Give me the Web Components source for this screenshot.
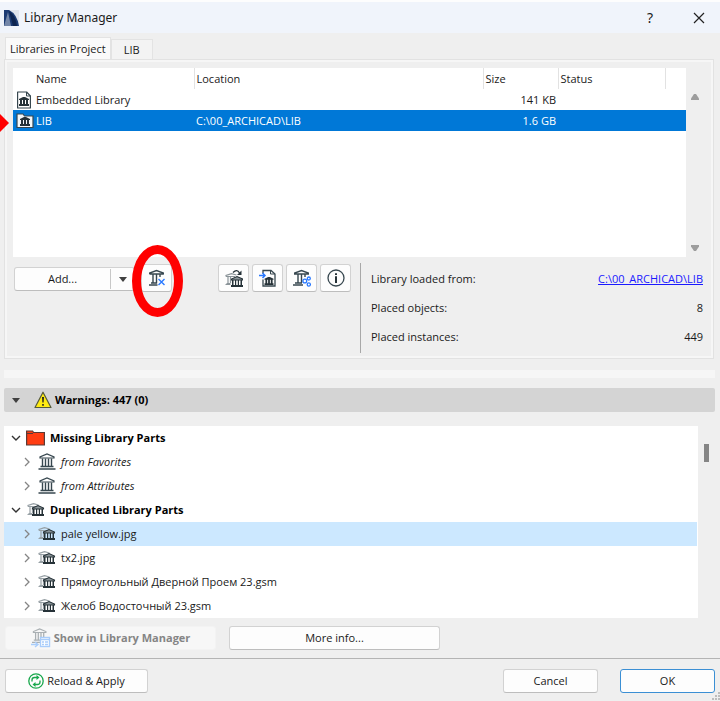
<!DOCTYPE html>
<html lang="en">
<head>
<meta charset="utf-8">
<title>Library Manager</title>
<style>
  html, body { height: 100%; margin: 0; }
  body {
    background: #efefef;
    color: #1a1a1a;
    font: 11px/16px "Open Sans", "Noto Sans", sans-serif;
  }
</style>
</head>
<body>
<library-manager></library-manager>

<script>
// outlined museum with four columns, 17x17 box
const hall = (x, y, s, color) => `
  <g transform="translate(${x} ${y}) scale(${s})" fill="none" stroke="${color}" stroke-width="1.2">
    <path d="M1.500 5V4L8.500 1l7 3v1Z"/>
    <path d="M4 5.500v8M7 5.500v8M10 5.500v8M13 5.500v8" stroke-width="1.400"/>
    <path d="M2 13.500h13M0 16h17" stroke-width="1.400"/>
  </g>`;

// solid museum, 10x9 box
const miniHall = (x, y) => `
  <path transform="translate(${x} ${y})" fill="#263238" d="M4 0h2l4 2v1H0V2ZM1 3h2v4H1ZM4 3h2v4H4ZM7 3h2v4H7ZM0 7h10v2H0Z"/>`;

// small museum with visible columns, 12x11 box
const smallHall = (x, y) => `
  <g transform="translate(${x} ${y})">
    <path d="M.500 4V3L6 .6 11.500 3v1Z" fill="#8a9499" stroke="#263238" stroke-width="1.100"/>
    <path fill="#263238" d="M1 4h1.500v5H1ZM4 4h1.200v5H4ZM6.800 4H8v5H6.800ZM9.500 4H11v5H9.500ZM0 9h12v2H0Z"/>
  </g>`;

const pillar = (x, y, color) => `
  <g transform="translate(${x} ${y})" fill="none" stroke="${color}" stroke-width="1.200">
    <path d="M.500 3.500V2.500L6 .6l5 1.400M.500 3.500h9M2.500 4v6M5 4v6M1 10.500h4M0 11.500h5"/>
  </g>`;

const ICONS = {
  app: [16, 16, `<path fill="#dfe4ec" d="M1 0h14v16H1z"/><path fill="#1c3b73" d="M0 0h5Q13 4 15 16H0Z"/><path fill="#dfe4ec" d="m0 16 4-14 3 14Z" opacity=".45"/><path fill="#0d2450" d="M5 1q7 5 8 15H9Z"/>`],
  doc: [16, 18, `<path d="M1.600 1h9L14.400 5v12H1.600Z" fill="#fff" stroke="#37474f" stroke-width="1.200" stroke-linejoin="round"/><path d="M10.500 1v4h4" fill="none" stroke="#37474f"/>${miniHall(3, 6)}`],
  folder: [18, 16, `<path d="M1 14.500V1h6l1.500 2H17v11.500Z" fill="#f4f7f9" stroke="#37474f" stroke-width="1.200"/>${miniHall(4, 4)}`],
  remove: [18, 18, `<g fill="none" stroke="#37474f" stroke-width="1.400"><path d="M1.700 5V4l6.800-2.500L15.300 4v1.500M1.500 5h14M5 5.500v9M8.500 5.500v9M12 5.500v2.500M3 14h6M1 16h8.500"/><path d="m10.500 10 6 6M16.500 10l-6 6" stroke="#2979ff"/></g>`],
  replace: [18, 18, `${pillar(.5, 4, "#8b9499")}<path d="M8 3.500q4-4 6.500.5" fill="none" stroke="#263238" stroke-width="1.300"/><path d="M16.500 1.500V6H12Z" fill="#263238"/>${smallHall(6, 7)}`],
  import: [18, 18, `<path d="M4 4.500v-3h8L16 5v12H4v-6.500" fill="none" stroke="#37474f" stroke-width="1.300"/><path d="M11.500 1.500V5H16" fill="none" stroke="#37474f"/><g transform="translate(5.500 8) scale(.9)">${miniHall(0, 0)}</g><path d="M0 6.500h6M3.500 4 6 6.500 3.500 9" fill="none" stroke="#2979ff" stroke-width="1.500"/>`],
  settings: [18, 18, `<g fill="none" stroke="#37474f" stroke-width="1.400"><path d="M1.700 5V4l6.800-2.500L15.300 4v1ZM5 5.500v8.500M8.500 5.500v8.500M12 5.500v2.500M2 14h7M0 16h10"/></g><g fill="#fff" stroke="#2979ff" stroke-width="1.300"><circle cx="11.800" cy="12" r="1.900"/><circle cx="15.800" cy="9.500" r="1.500"/><circle cx="15.800" cy="15.500" r="1.600"/></g>`],
  info: [18, 18, `<circle cx="9" cy="9" r="8" fill="none" stroke="#37474f" stroke-width="1.300"/><path d="M8 4.200h2v1.800H8ZM8 7.300h2V14H8Z" fill="#263238"/>`],
  warning: [18, 18, `<path d="M9 1.200 17 16.500H1Z" fill="#ffeb12" stroke="#555a3a" stroke-width="1.200" stroke-linejoin="round"/><path d="M8 6h2l-.4 5.500H8.400ZM8.200 13h1.600v1.800H8.200Z" fill="#222"/>`],
  missing: [19, 16, `<path d="M.600 15V1h6l1 1.500h10.800V15Z" fill="#ff3d12" stroke="#5a3a36" stroke-width="1.200"/><path d="M1 3.500h6" stroke="#5a3a36"/>`],
  hall: [19, 18, hall(1.5, 0, 1, "#37474f")],
  duplicate: [19, 14, `${pillar(1.5, 0, "#98a1a6")}${smallHall(6, 2)}`],
  show: [20, 20, `${hall(1, 0, .9, "#aab0b3")}<rect x="9.500" y="9.500" width="9" height="9" fill="#fff" stroke="#a9cdfb" stroke-width="1.400"/><path d="M9 11.500h10M11 14h2M14 14h3M11 16.500h2M14 16.500h3M0 16.500h6M4 14l3 2.500L4 19" fill="none" stroke="#a9cdfb" stroke-width="1.400"/>`],
  reload: [16, 16, `<g fill="none" stroke="#18a84c" stroke-width="1.300"><circle cx="8" cy="8" r="7.200"/><path d="M4 8.500V7q0-2.500 2.500-2.500h3M12 7.500V9q0 2.500-2.500 2.500h-3"/></g><path d="M8.500 2 11.500 4.500 8.500 7ZM7.500 9 4.500 11.500 7.500 14Z" fill="#18a84c"/>`],
  close: [12, 12, `<path d="m1 1 10 10M11 1 1 11" stroke="#222" stroke-width="1.200"/>`],
  down: [8, 5, `<path d="M0 0h8L4 5Z" fill="#404040"/>`],
  scrollUp: [8, 6, `<path d="M3 0h2l3 4.500V6H0V4.500Z" fill="#9d9d9d"/>`],
  scrollDown: [8, 6, `<path d="M3 6h2l3-4.500V0H0v1.500Z" fill="#9d9d9d"/>`],
  open: [10, 10, `<path d="m1 3 4 4 4-4" fill="none" stroke="#333" stroke-width="1.400"/>`],
  closed: [10, 10, `<path d="m3 1 4 4-4 4" fill="none" stroke="#858585" stroke-width="1.300"/>`],
  grip: [8, 8, `<path d="M6 0h2v2H6ZM3 3h2v2H3ZM6 3h2v2H6ZM0 6h2v2H0ZM3 6h2v2H3ZM6 6h2v2H6Z" fill="#bdbdbd"/>`],
};

class LmIcon extends HTMLElement {
  connectedCallback() {
    const [w, h, body] = ICONS[this.getAttribute("name")];
    this.attachShadow({ mode: "open" }).innerHTML = `
      <style>
        :host { display: inline-block; flex: none; line-height: 0; }
        svg { display: block; }
      </style>
      <svg width="${w}" height="${h}" viewBox="0 0 ${w} ${h}" aria-hidden="true">${body}</svg>`;
  }
}

class LmButton extends HTMLElement {
  connectedCallback() {
    const label = this.getAttribute("label");
    this.attachShadow({ mode: "open" }).innerHTML = `
      <style>
        :host { display: block; }
        button {
          display: flex;
          align-items: center;
          justify-content: center;
          gap: 3px;
          box-sizing: border-box;
          width: 100%;
          height: 24px;
          padding: 0;
          border: 1px solid #d2d2d2;
          border-bottom-color: #bdbdbd;
          border-radius: 3px;
          background: #fdfdfd;
          color: inherit;
          font: inherit;
        }
        :host([tall]) button { height: 28px; }
        :host([primary]) button { border-color: #3b8fd4; }
        button:disabled {
          border-color: #f3f3f3;
          background: #f7f7f7;
          color: #858585;
          font-weight: bold;
        }
      </style>
      <button type="button" ${this.hasAttribute("disabled") ? "disabled" : ""} ${label ? `aria-label="${label}"` : ""}><slot></slot></button>`;
  }
}

class LmTitlebar extends HTMLElement {
  connectedCallback() {
    this.attachShadow({ mode: "open" }).innerHTML = `
      <style>
        :host {
          display: flex;
          align-items: center;
          height: 31px;
          padding: 0 15px 0 4px;
          border-top: 2px solid #fdfdfd;
          background: #f0f4fb;
          font-family: "Noto Sans", sans-serif;
          font-size: 12px;
        }
        h1 { flex: 1; margin: 0 0 0 4px; font: inherit; }
        button { border: 0; padding: 0; background: none; color: inherit; font: inherit; }
        button lm-icon { display: block; }
        .help { margin-right: 40px; font-size: 14px; }
      </style>
      <lm-icon name="app"></lm-icon>
      <h1><slot></slot></h1>
      <button class="help" type="button">?</button>
      <button type="button" aria-label="Close"><lm-icon name="close"></lm-icon></button>`;
  }
}

class LibraryTable extends HTMLElement {
  connectedCallback() {
    this.attachShadow({ mode: "open" }).innerHTML = `
      <style>
        :host { display: flex; height: 189px; }
        .sheet { flex: 1; background: #fff; }
        table { width: 100%; border-collapse: collapse; table-layout: fixed; }
        th, td { box-sizing: border-box; padding: 0 2px; text-align: left; font-weight: normal; white-space: nowrap; }
        th { height: 21px; border-right: 1px solid #e2e2e2; }
        th:first-child, th:last-child { border-right: 0; }
        td { height: 21px; }
        td.icon { padding: 0 0 0 3px; }
        td.icon lm-icon { display: block; }
        td.size { text-align: right; }
        tr.selected { background: #0078d7; color: #fff; }
        .scroll {
          display: flex;
          flex-direction: column;
          justify-content: space-between;
          align-items: center;
          box-sizing: border-box;
          width: 17px;
          padding: 26px 0 6px;
        }
      </style>
      <div class="sheet">
        <table>
          <colgroup><col style="width:21px"><col style="width:160px"><col><col style="width:75px"><col style="width:107px"><col style="width:21px"></colgroup>
          <thead><tr><th></th><th>Name</th><th>Location</th><th>Size</th><th>Status</th><th></th></tr></thead>
          <tbody>
            <tr><td class="icon"><lm-icon name="doc"></lm-icon></td><td>Embedded Library</td><td></td><td class="size">141 KB</td><td></td><td></td></tr>
            <tr class="selected"><td class="icon"><lm-icon name="folder"></lm-icon></td><td>LIB</td><td>C:\\00_ARCHICAD\\LIB</td><td class="size">1.6 GB</td><td></td><td></td></tr>
          </tbody>
        </table>
      </div>
      <div class="scroll"><lm-icon name="scrollUp"></lm-icon><lm-icon name="scrollDown"></lm-icon></div>`;
  }
}

class LibraryTools extends HTMLElement {
  connectedCallback() {
    this.attachShadow({ mode: "open" }).innerHTML = `
      <style>
        :host { display: flex; height: 90px; margin-top: 6px; }
        .tools { display: flex; flex: none; align-items: flex-start; width: 347px; padding-top: 1px; box-sizing: border-box; }
        .split {
          display: flex;
          box-sizing: border-box;
          width: 121px;
          height: 24px;
          margin: 3px 6px 0 1px;
          border: 1px solid #d2d2d2;
          border-bottom-color: #bdbdbd;
          border-radius: 3px;
          background: #fdfdfd;
        }
        .split button { padding: 0; border: 0; background: none; color: inherit; font: inherit; }
        .split .add { flex: 1; }
        .split .more { display: grid; place-items: center; width: 24px; margin: 1px 0; border-left: 1px solid #c8c8c8; }
        .marked { position: relative; width: 31px; }
        .ring {
          position: absolute;
          top: -19px;
          left: -9px;
          box-sizing: border-box;
          width: 51px;
          height: 72px;
          border: 9px solid #f00;
          border-radius: 50%;
          pointer-events: none;
        }
        .group { display: flex; gap: 3px; margin-left: 46px; }
        .group lm-button { width: 31px; }
        dl {
          flex: 1;
          display: flex;
          flex-direction: column;
          gap: 13px;
          margin: 0;
          padding: 8px 0 0 10px;
          border-left: 1px solid #a8a8a8;
        }
        dl div { display: flex; justify-content: space-between; }
        dd { margin: 0; }
        a { color: #1a1aff; }
      </style>
      <div class="tools">
        <div class="split">
          <button class="add" type="button">Add...</button>
          <button class="more" type="button" aria-label="More add options"><lm-icon name="down"></lm-icon></button>
        </div>
        <div class="marked">
          <lm-button tall label="Remove"><lm-icon name="remove"></lm-icon></lm-button>
          <div class="ring"></div>
        </div>
        <div class="group">
          <lm-button tall label="Replace"><lm-icon name="replace"></lm-icon></lm-button>
          <lm-button tall label="Import"><lm-icon name="import"></lm-icon></lm-button>
          <lm-button tall label="Settings"><lm-icon name="settings"></lm-icon></lm-button>
          <lm-button tall label="Info"><lm-icon name="info"></lm-icon></lm-button>
        </div>
      </div>
      <dl>
        <div><dt>Library loaded from:</dt><dd><a href="#lib">C:\\00_ARCHICAD\\LIB</a></dd></div>
        <div><dt>Placed objects:</dt><dd>8</dd></div>
        <div><dt>Placed instances:</dt><dd>449</dd></div>
      </dl>`;
  }
}

class WarningRow extends HTMLElement {
  connectedCallback() {
    const state = this.hasAttribute("group") ? "open" : "closed";
    this.attachShadow({ mode: "open" }).innerHTML = `
      <style>
        :host { display: flex; align-items: center; height: 24px; padding-left: 18px; white-space: nowrap; }
        :host([group]) { padding-left: 7px; font-weight: bold; color: #000; }
        :host([italic]) { font-style: italic; }
        :host([selected]) { background: #cce8ff; }
        button { display: block; padding: 0; border: 0; margin-right: 5px; background: none; }
        button lm-icon { display: block; }
        .kind { width: 19px; margin-right: 5px; }
      </style>
      <button type="button" aria-label="Toggle"><lm-icon name="${state}"></lm-icon></button>
      <lm-icon class="kind" name="${this.getAttribute("icon")}"></lm-icon>
      <slot></slot>`;
  }
}

class LibraryManager extends HTMLElement {
  connectedCallback() {
    this.attachShadow({ mode: "open" }).innerHTML = `
      <style>
        :host { display: block; min-height: 100%; position: relative; overflow: hidden; }
        .tabs { display: flex; align-items: flex-end; padding: 4px 0 0 5px; }
        .tabs button {
          box-sizing: border-box;
          height: 20px;
          padding: 0 12px;
          border: 1px solid #e3e3e3;
          border-bottom: 0;
          background: #f3f3f3;
          color: inherit;
          font: inherit;
        }
        .tabs .current { height: 22px; padding: 0 4px; background: #fafafa; }
        .panel { margin: 0 6px 0 4px; padding: 8px 10px 5px 8px; border: 1px solid #e2e2e2; box-shadow: inset 0 0 0 2px #f6f6f6; }
        .strip { height: 8px; margin: 11px 5px 10px 4px; background: #f6f6f6; }
        .warnings {
          display: flex;
          align-items: center;
          height: 24px;
          margin: 0 5px 14px 4px;
          padding-left: 8px;
          border-radius: 2px;
          background: #d4d4d4;
          color: #000;
          font-weight: bold;
        }
        .warnings button { padding: 0; margin-right: 14px; border: 0; background: none; }
        .warnings lm-icon { display: block; }
        .warnings span { margin-left: 3px; }
        .tree { display: flex; margin-left: 4px; }
        .rows { flex: 1; padding-right: 1px; background: #fff; }
        .track { width: 22px; padding-top: 18px; box-sizing: border-box; }
        .thumb { width: 5px; height: 18px; margin-left: 6px; background: #858585; }
        .actions { display: flex; gap: 13px; padding: 8px 5px; border-bottom: 1px solid #b4b4b4; }
        .actions lm-button { width: 211px; }
        footer { display: flex; align-items: center; gap: 22px; padding: 10px 5px 8px; }
        .reload { width: 143px; margin-right: auto; }
        .cancel, .ok { width: 95px; }
        .grip { position: absolute; right: 0; bottom: 1px; }
        .arrow {
          position: absolute;
          left: 0;
          top: 114px;
          border: 9px solid transparent;
          border-left-color: #f00;
          border-right: 0;
        }
      </style>
      <lm-titlebar>Library Manager</lm-titlebar>
      <nav class="tabs">
        <button class="current" type="button">Libraries in Project</button>
        <button type="button">LIB</button>
      </nav>
      <section class="panel">
        <library-table></library-table>
        <library-tools></library-tools>
      </section>
      <div class="strip"></div>
      <div class="warnings">
        <button type="button" aria-label="Collapse warnings"><lm-icon name="down"></lm-icon></button>
        <lm-icon name="warning"></lm-icon>
        <span>Warnings: 447 (0)</span>
      </div>
      <section class="tree">
        <div class="rows">
          <warning-row group icon="missing">Missing Library Parts</warning-row>
          <warning-row italic icon="hall">from Favorites</warning-row>
          <warning-row italic icon="hall">from Attributes</warning-row>
          <warning-row group icon="duplicate">Duplicated Library Parts</warning-row>
          <warning-row selected icon="duplicate">pale yellow.jpg</warning-row>
          <warning-row icon="duplicate">tx2.jpg</warning-row>
          <warning-row icon="duplicate">Прямоугольный Дверной Проем 23.gsm</warning-row>
          <warning-row icon="duplicate">Желоб Водосточный 23.gsm</warning-row>
        </div>
        <div class="track"><div class="thumb"></div></div>
      </section>
      <div class="actions">
        <lm-button disabled><lm-icon name="show"></lm-icon>Show in Library Manager</lm-button>
        <lm-button>More info...</lm-button>
      </div>
      <footer>
        <lm-button class="reload"><lm-icon name="reload"></lm-icon>Reload &amp; Apply</lm-button>
        <lm-button class="cancel">Cancel</lm-button>
        <lm-button class="ok" primary>OK</lm-button>
      </footer>
      <lm-icon class="grip" name="grip"></lm-icon>
      <div class="arrow"></div>`;
  }
}

customElements.define("lm-icon", LmIcon);
customElements.define("lm-button", LmButton);
customElements.define("lm-titlebar", LmTitlebar);
customElements.define("library-table", LibraryTable);
customElements.define("library-tools", LibraryTools);
customElements.define("warning-row", WarningRow);
customElements.define("library-manager", LibraryManager);
</script>
</body>
</html>
